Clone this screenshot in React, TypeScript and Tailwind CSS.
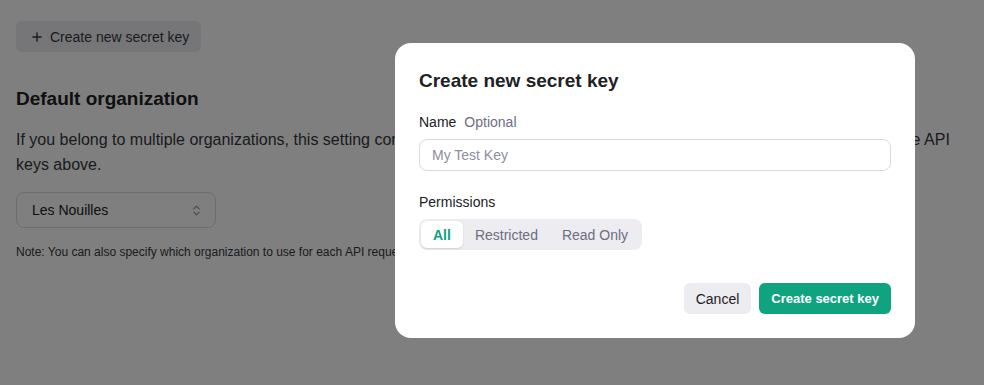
import { ChevronsUpDown, Plus } from 'lucide-react';

const font = { fontFamily: '"Liberation Sans", Arial, sans-serif' };

function Segmented() {
  const opts = ['All', 'Restricted', 'Read Only'];
  return (
    <div className="inline-flex rounded-lg bg-[#ececf1] p-0.5">
      {opts.map((o, i) => (
        <button
          key={o}
          className={
            i === 0
              ? 'h-[27px] rounded-md bg-white px-3 text-sm font-bold text-[#10a37f] shadow-[0_1px_2px_rgba(0,0,0,0.12)]'
              : 'h-[27px] rounded-md px-3 text-sm text-[#6e6e80]'
          }
        >
          {o}
        </button>
      ))}
    </div>
  );
}

function Modal() {
  return (
    <div className="fixed inset-0 flex items-center bg-black/50 pl-[395px]">
      <div className="mt-[-4px] w-[520px] rounded-2xl bg-white p-6 text-[#202123]">
        <h2 className="text-[19px] font-bold leading-7">Create new secret key</h2>
        <div className="mt-[17px] text-sm leading-5">
          <span className="text-[#202123]">Name</span>
          <span className="ml-2 text-[#6e6e80]">Optional</span>
        </div>
        <input
          placeholder="My Test Key"
          className="mt-[7px] h-8 w-full rounded-lg border border-[#d9d9e3] px-3 text-sm outline-none placeholder:text-[#8e8ea0]"
          style={font}
        />
        <div className="mt-[21px] text-sm leading-5">Permissions</div>
        <div className="mt-[7px]">
          <Segmented />
        </div>
        <div className="mt-[33px] flex justify-end gap-2">
          <button className="h-[31px] rounded-md bg-[#ececf1] px-3 text-sm text-[#202123]">Cancel</button>
          <button className="h-[31px] rounded-md bg-[#10a37f] px-3 text-[13px] font-bold text-white">
            Create secret key
          </button>
        </div>
      </div>
    </div>
  );
}

export default function App() {
  return (
    <div className="h-[385px] overflow-hidden bg-white px-4 pt-[21px] text-[#202123]" style={font}>
      <button className="flex h-[31px] items-center gap-1.5 rounded-md bg-[#ececf1] pl-3.5 pr-3 text-sm text-[#353740]">
        <Plus size={14} strokeWidth={2.5} />
        Create new secret key
      </button>
      <h2 className="mt-[33px] text-[19px] font-bold leading-7">Default organization</h2>
      <p className="mt-[14px] text-base leading-[25px] text-[#353740]">
        If you belong to multiple organizations, this setting controls which organization is used by default when making requests with the API
        keys above.
      </p>
      <div className="mt-[15px] flex h-9 w-[200px] items-center justify-between rounded-lg border border-[#d9d9e3] pl-[15px] pr-3 text-sm">
        <span>Les Nouilles</span>
        <ChevronsUpDown size={13} className="text-[#8e8ea0]" />
      </div>
      <p className="mt-4 text-xs text-[#353740]">
        Note: You can also specify which organization to use for each API request. See Authentication to learn more.
      </p>
      <Modal />
    </div>
  );
}
